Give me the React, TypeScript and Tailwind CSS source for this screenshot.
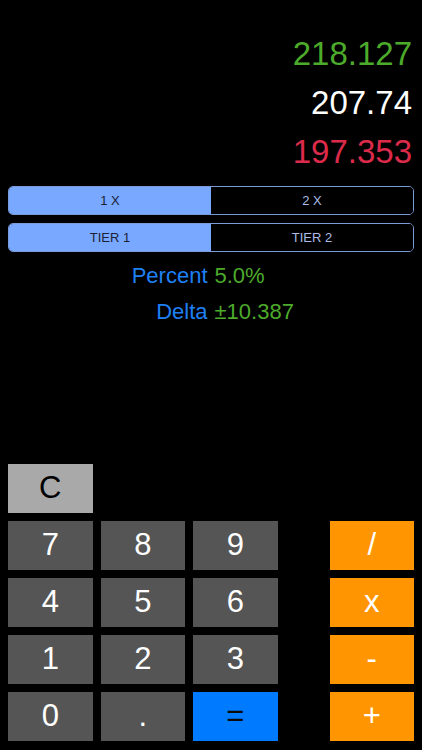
import React from "react";

const digitKeys = [
  ["7", "8", "9", "/"],
  ["4", "5", "6", "x"],
  ["1", "2", "3", "-"],
  ["0", ".", "=", "+"],
];

function Segmented({ left, right }: { left: string; right: string }) {
  return (
    <div className="flex h-[29px] overflow-hidden rounded-[5px] border border-[#7b9ad8] text-[13px]">
      <div className="flex flex-1 items-center justify-center bg-[#78a8ff] text-[#1b2233]">{left}</div>
      <div className="flex flex-1 items-center justify-center bg-black text-[#a9bde6]">{right}</div>
    </div>
  );
}

function Key({ label }: { label: string }) {
  const isOp = ["/", "x", "-", "+"].includes(label);
  const isEq = label === "=";
  let cls = "bg-[#555555] text-white";
  if (isOp) cls = "bg-[#ff9500] text-white";
  if (isEq) cls = "bg-[#007aff] text-[#0a0a0a]";
  return (
    <div className={`flex h-[49px] items-center justify-center text-[31px] ${cls}`}>{label}</div>
  );
}

export default function App() {
  return (
    <div
      className="flex h-[750px] w-[422px] flex-col bg-black"
      style={{ fontFamily: '"Liberation Sans", Arial, sans-serif' }}
    >
      <div className="flex flex-col items-end px-[10px] pt-[29px] text-[33px] leading-[49px]">
        <div className="text-[#4dab2b]">218.127</div>
        <div className="text-white">207.74</div>
        <div className="text-[#dc2b4a]">197.353</div>
      </div>

      <div className="mt-[10px] flex flex-col gap-2 px-2">
        <Segmented left="1 X" right="2 X" />
        <Segmented left="TIER 1" right="TIER 2" />
      </div>

      <div className="mt-[6px] grid grid-cols-2 gap-x-[7px] text-[22px] leading-[36px]">
        <div className="text-right text-[#1f80f5]">Percent</div>
        <div className="text-[#4dab2b]">5.0%</div>
        <div className="text-right text-[#1f80f5]">Delta</div>
        <div className="text-[#4dab2b]">±10.387</div>
      </div>

      <div className="mt-auto grid grid-cols-[84.5px_84.5px_84.5px_1fr_84.5px] gap-2 px-2 pb-[9px]">
        <div className="flex h-[49px] items-center justify-center bg-[#a9a9a9] text-[31px] text-black">
          C
        </div>
        <div className="col-span-4" />
        {digitKeys.map((row) => (
          <React.Fragment key={row.join("")}>
            <Key label={row[0]} />
            <Key label={row[1]} />
            <Key label={row[2]} />
            <div />
            <Key label={row[3]} />
          </React.Fragment>
        ))}
      </div>
    </div>
  );
}
